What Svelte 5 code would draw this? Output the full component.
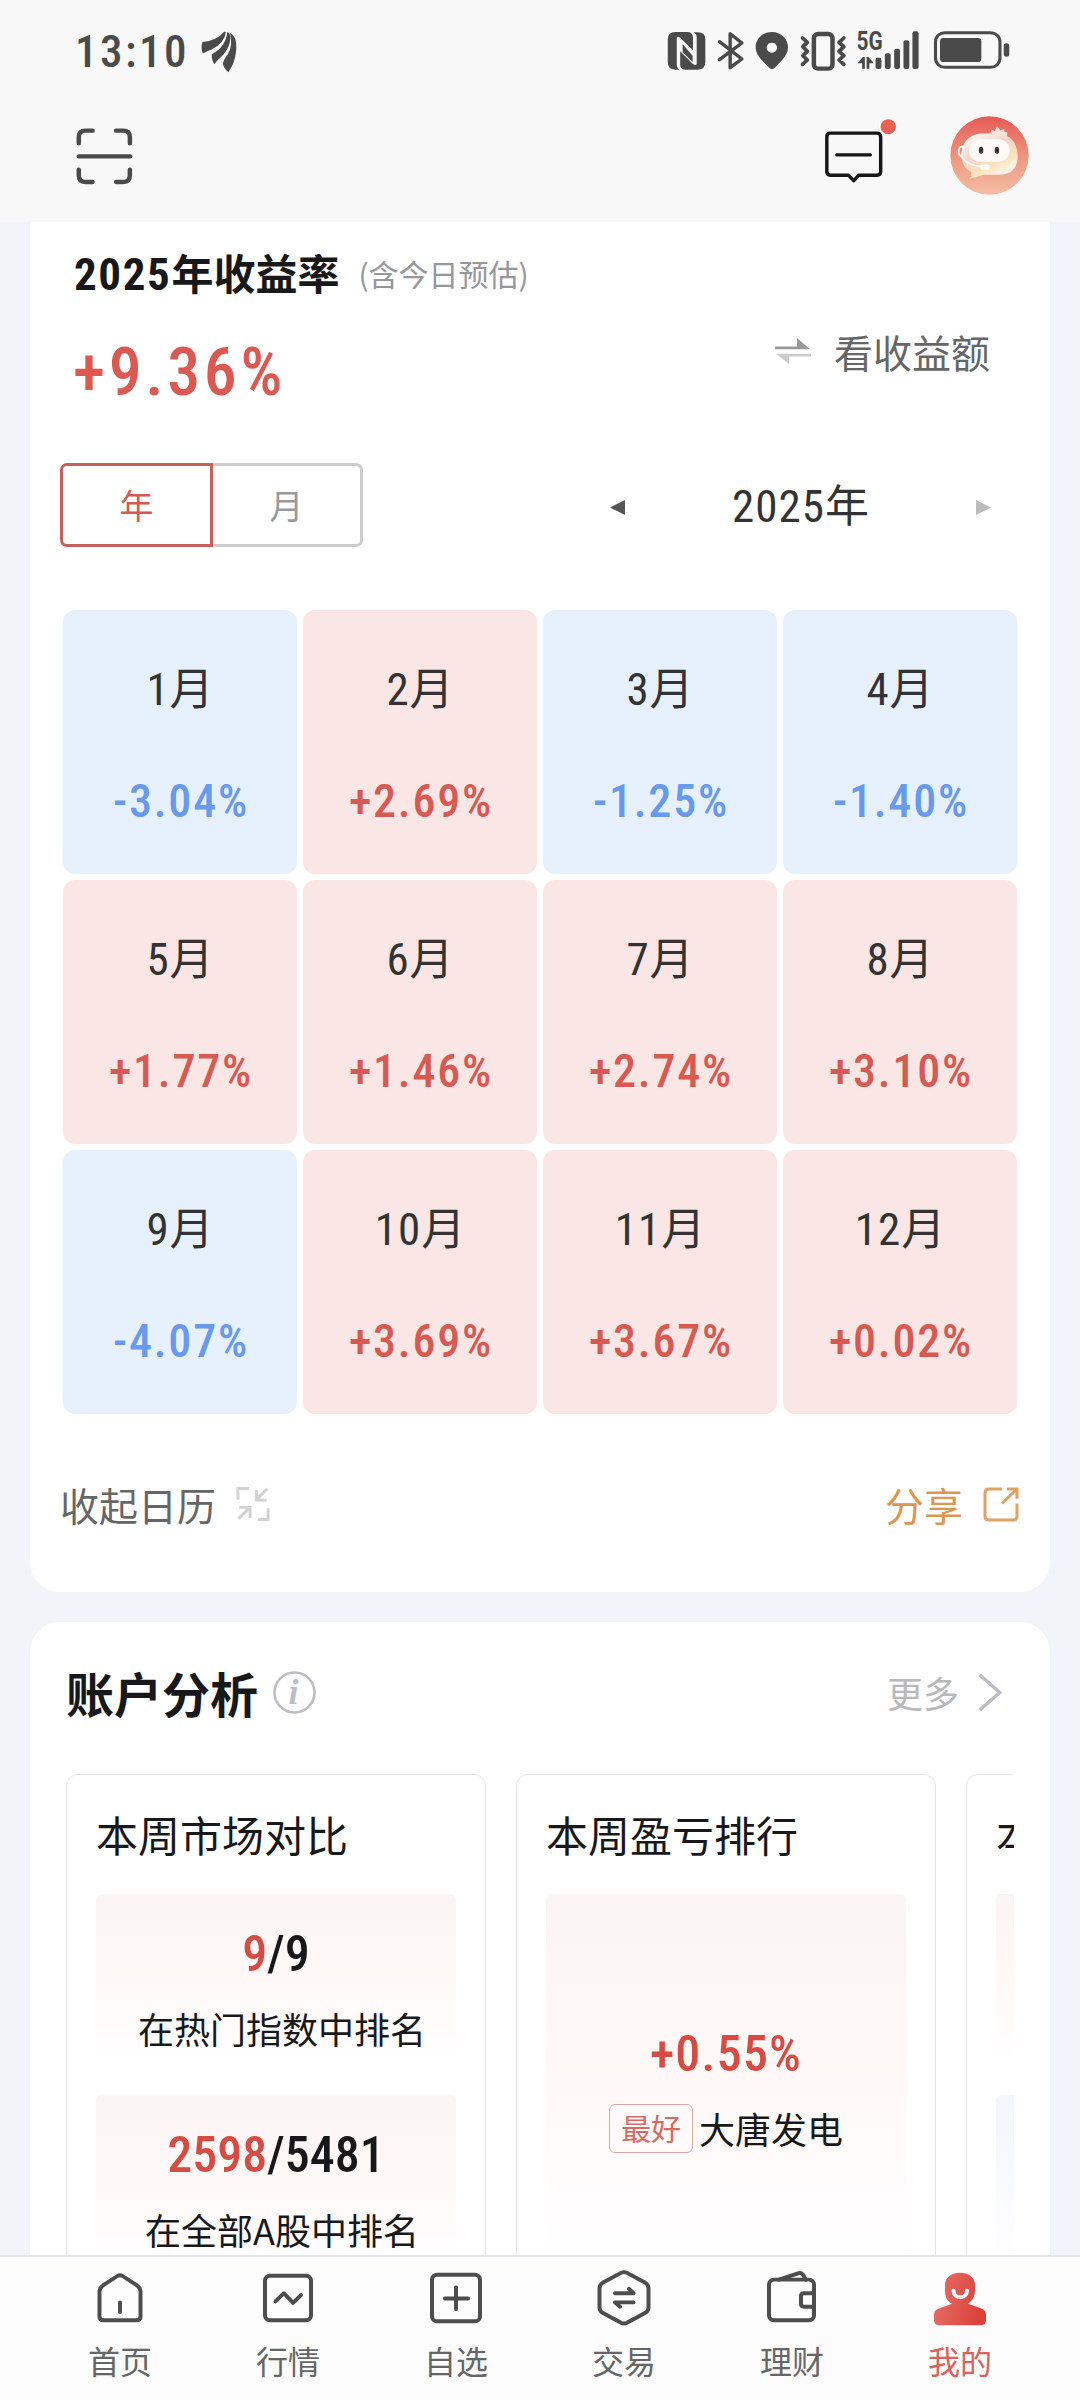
<script>
	const months = [
		{ n: 1, rate: '-3.04%' },
		{ n: 2, rate: '+2.69%' },
		{ n: 3, rate: '-1.25%' },
		{ n: 4, rate: '-1.40%' },
		{ n: 5, rate: '+1.77%' },
		{ n: 6, rate: '+1.46%' },
		{ n: 7, rate: '+2.74%' },
		{ n: 8, rate: '+3.10%' },
		{ n: 9, rate: '-4.07%' },
		{ n: 10, rate: '+3.69%' },
		{ n: 11, rate: '+3.67%' },
		{ n: 12, rate: '+0.02%' }
	];

	const tabs = [
		{ id: 'home', label: '首页' },
		{ id: 'market', label: '行情' },
		{ id: 'watch', label: '自选' },
		{ id: 'trade', label: '交易' },
		{ id: 'wealth', label: '理财' },
		{ id: 'mine', label: '我的' }
	];

	const ranks = [
		{ pos: 9, total: 9, label: '在热门指数中排名' },
		{ pos: 2598, total: 5481, label: '在全部A股中排名' }
	];

	let mode = $state('year');
	let activeTab = $state('mine');
</script>

<div class="page">
	<header>
		<div class="status">
			<div class="clock">
				<span class="time">13:10</span>
				<svg width="36" height="42" viewBox="580 92 104 125" preserveAspectRatio="none" fill="#4a4a4a">
					<path d="M584 125Q626 120 647 94L652 95Q648 128 612 146Q596 152 585 159Q579 142 584 125Z" />
					<path d="M656 95Q666 98 665 116Q661 150 635 172Q625 180 619 191Q610 178 611 161Q651 141 656 95Z" />
					<path d="M664 98Q684 107 682 146Q679 186 659 215Q645 202 643 188Q646 176 657 162Q673 136 664 98Z" />
				</svg>
			</div>
			<svg class="status-icons" width="348" height="45" viewBox="360 85 1010 135" preserveAspectRatio="none" fill="#4a4a4a">
				<!-- nfc -->
				<path d="M393 97H430Q443 98 444 112V152L410 117Q402 108 397 114V196Q398 208 406 210H393Q371 210 371 188V119Q371 97 393 97Z" />
				<path d="M446 98H458Q480 98 480 119V188Q480 210 458 210H422Q407 209 407 195V155L441 190Q451 200 455 193V114Q455 104 446 98Z" />
				<path d="M414 135L434 155V166L443 176V186L414 158Z" fill="#f8f8f8" />
				<path d="M414 133V158L443 187V168L414 133Z" />
				<!-- bluetooth -->
				<path d="M521 126L586 178L552 204V102L586 130L521 180" fill="none" stroke="#4a4a4a" stroke-width="10" stroke-linejoin="round" stroke-linecap="round" />
				<!-- location -->
				<path fill-rule="evenodd" d="M673 97C700 97 720 118 720 143C720 170 694 190 681 205Q673 212 666 205C653 190 626 170 626 143C626 118 646 97 673 97ZM673 129a15 15 0 1 0 .1 0Z" />
				<!-- vibrate -->
				<rect x="795" y="103" width="54" height="104" rx="12" fill="none" stroke="#4a4a4a" stroke-width="13" />
				<path d="M762 115L776 128L763 141L776 155L763 168L776 181L762 194M882 115L868 128L882 141L868 155L882 168L868 181L882 194" fill="none" stroke="#4a4a4a" stroke-width="11" stroke-linejoin="round" stroke-linecap="round" />
				<!-- signal -->
				<text class="net" x="919" y="150" textLength="76" lengthAdjust="spacingAndGlyphs">5G</text>
				<path d="M921 191L937 172H943V207H935V191ZM948 172H953L967 188V191H956V207H948Z" />
				<rect x="974" y="174" width="17" height="34" rx="6" />
				<rect x="1001" y="161" width="17" height="47" rx="6" />
				<rect x="1028" y="147" width="17" height="61" rx="6" />
				<rect x="1055" y="122" width="17" height="86" rx="6" />
				<rect x="1081" y="95" width="18" height="113" rx="6" />
				<!-- battery -->
				<rect x="1148" y="99" width="187" height="104" rx="27" fill="none" stroke="#4a4a4a" stroke-width="9" />
				<rect x="1161" y="115" width="120" height="72" rx="10" />
				<rect x="1346" y="131" width="16" height="40" rx="8" />
			</svg>
		</div>
		<div class="toolbar">
			<svg class="scan" width="59" height="57" viewBox="219 385 171 171" preserveAspectRatio="none" fill="none" stroke="#4a4a4a" stroke-width="13" stroke-linecap="round" stroke-linejoin="round">
				<path d="M230 431V412Q230 393 249 393H270M338 393H359Q378 393 378 412V431M378 510V527Q378 547 359 547H338M270 547H249Q230 547 230 527V510M230 470H379" />
			</svg>
			<div class="tools">
				<svg width="78" height="69" viewBox="820 350 226 206" preserveAspectRatio="none">
					<path d="M844 401H979Q990 401 990 412V516Q990 527 979 527H926L912 543L897 527H844Q834 527 834 516V412Q834 401 844 401ZM863 466H960" fill="none" stroke="#161616" stroke-width="10" stroke-linecap="round" stroke-linejoin="round" />
					<circle cx="1012" cy="382" r="28" fill="#fff" />
					<circle cx="1012" cy="382" r="22.5" fill="#ea6153" />
				</svg>
				<svg width="79" height="79" viewBox="1192 348 229 238" preserveAspectRatio="none">
					<defs>
						<linearGradient id="sky" x1="0" y1="0" x2="0" y2="1">
							<stop offset="0" stop-color="#e65a55" />
							<stop offset=".55" stop-color="#ee9a83" />
							<stop offset="1" stop-color="#f4bda3" />
						</linearGradient>
						<linearGradient id="face" x1="0" y1="0" x2=".6" y2="1">
							<stop offset="0" stop-color="#fff" />
							<stop offset=".45" stop-color="#f8d3cb" />
							<stop offset=".75" stop-color="#fae3b8" />
							<stop offset="1" stop-color="#fff6f2" />
						</linearGradient>
					</defs>
					<ellipse cx="1306.5" cy="467" rx="113.5" ry="118" fill="url(#sky)" />
					<path d="M1308 404L1313 389L1322 394L1329 378L1338 392L1349 387L1350 397L1358 396L1357 412Z" fill="#fde3de" />
					<path d="M1290 401H1325C1368 401 1388 430 1388 470C1388 506 1368 525 1335 525H1290L1248 538Q1256 528 1254 517C1235 507 1225 490 1226 466C1226 425 1250 401 1290 401Z" fill="url(#face)" />
					<rect x="1247" y="418" width="118" height="68" rx="33" fill="#fffaf8" />
					<ellipse cx="1282" cy="451" rx="6.5" ry="10.5" fill="#3d3431" />
					<ellipse cx="1328" cy="451" rx="6.5" ry="10.5" fill="#3d3431" />
					<path d="M1225 470C1212 462 1217 440 1227 440C1234 445 1228 460 1225 470Q1240 496 1284 501" fill="none" stroke="#fff" stroke-width="5" stroke-linecap="round" />
					<rect x="1280" y="494" width="27" height="16" rx="6" fill="#fff" />
				</svg>
			</div>
		</div>
	</header>

	<main>
		<section class="card profit">
			<div class="profit-title">
				<h2><span class="din">2025</span>年收益率</h2>
				<small>(含今日预估)</small>
			</div>
			<div class="profit-sum">
				<div class="total din">+9.36%</div>
				<div class="switch-amount">
					<svg width="36" height="27" viewBox="0 0 36 29" preserveAspectRatio="none">
						<path d="M0 9H22V0L35 12H0Z" fill="#999" />
						<path d="M36 17H1L14 28V20H36Z" fill="#ccc" />
					</svg>
					看收益额
				</div>
			</div>
			<div class="period">
				<div class="toggle">
					<button class:on={mode === 'year'} onclick={() => (mode = 'year')}>年</button>
					<button class:on={mode === 'month'} onclick={() => (mode = 'month')}>月</button>
				</div>
				<div class="year-nav">
					<svg width="15" height="15" viewBox="0 0 15 15"><path d="M0 7.5L15 0V15Z" fill="#555" /></svg>
					<div class="year"><span class="din">2025</span>年</div>
					<svg width="15" height="15" viewBox="0 0 15 15"><path d="M15 7.5L0 0V15Z" fill="#bbb" /></svg>
				</div>
			</div>
			<div class="months">
				{#each months as m}
					<div class="month" class:down={m.rate.startsWith('-')}>
						<div class="name"><span class="din">{m.n}</span>月</div>
						<div class="rate din">{m.rate}</div>
					</div>
				{/each}
			</div>
			<div class="profit-foot">
				<div class="fold">
					收起日历
					<svg width="34" height="34" viewBox="0 0 34 35" fill="none" stroke="#d2d2d2" stroke-width="3">
						<path d="M1.5 13V1.5H13M32 1.5L20.5 13M20.5 3V13.5H31M2 32.5L13 22M3 21H14V32M32.5 22V33.5H22" />
					</svg>
				</div>
				<div class="share">
					分享
					<svg width="36" height="35" viewBox="0 0 36 36" fill="none" stroke="#e0a263" stroke-width="3" preserveAspectRatio="none">
						<path d="M19 2H6Q2 2 2 6V30Q2 34 6 34H30Q34 34 34 30V17M19 17L33 3M24 2H34V12" />
					</svg>
				</div>
			</div>
		</section>

		<section class="card analysis">
			<div class="analysis-head">
				<h2>账户分析</h2>
				<svg width="43" height="43" viewBox="0 0 43 43">
					<circle cx="21.5" cy="21.5" r="20" fill="none" stroke="#bcbcc5" stroke-width="2.6" />
					<text class="info" x="20.5" y="33" text-anchor="middle">i</text>
				</svg>
				<div class="more">
					更多
					<svg width="25" height="37" viewBox="0 0 25 38" fill="none" stroke="#bcbcc5" stroke-width="3.5">
						<path d="M1.5 1L22 19L1.5 37" />
					</svg>
				</div>
			</div>
			<div class="panels">
				<div class="panel">
					<h3>本周市场对比</h3>
					{#each ranks as r}
						<div class="box">
							<div class="figure din"><em>{r.pos}</em>/{r.total}</div>
							<div class="caption">{r.label}</div>
						</div>
					{/each}
				</div>
				<div class="panel">
					<h3>本周盈亏排行</h3>
					<div class="box tall">
						<div class="figure din"><em>+0.55%</em></div>
						<div class="best"><span class="badge">最好</span>大唐发电</div>
					</div>
				</div>
				<div class="panel">
					<h3>本</h3>
					<div class="box"></div>
					<div class="box cool"></div>
				</div>
			</div>
		</section>
	</main>

	<nav>
		{#each tabs as tab}
			<button class="tab" class:active={activeTab === tab.id} onclick={() => (activeTab = tab.id)}>
				<svg width="60" height="60" viewBox="0 0 60 62" preserveAspectRatio="none" fill="none" stroke="#4d4d4d" stroke-width="4" stroke-linecap="round" stroke-linejoin="round">
					{#if tab.id === 'home'}
						<path d="M27 7.5Q30 5.500 33 7.5L47 17Q50.5 19.5 50.5 23V49Q50.5 53 46.5 53H13.5Q9.5 53 9.5 49V23Q9.5 19.5 13 17ZM30 34.5V44.5" />
					{:else if tab.id === 'market'}
						<rect x="7" y="7" width="46" height="46" rx="5" />
						<path d="M17.5 33.5L26 25L35 35L43 27" />
					{:else if tab.id === 'watch'}
						<rect x="6" y="6" width="48" height="48" rx="5" />
						<path d="M30 19V41.5M19 30.5H42" />
					{:else if tab.id === 'trade'}
						<path d="M27 4Q30 2.5 33 4L51 14Q54.5 16.5 54.5 20V40Q54.5 43.5 51 45.5L33 55.5Q30 57 27 55.5L9 45.5Q5.500 43.5 5.5 40V20Q5.5 16.5 9 14ZM21 25H39.5L35 20.5M39.5 34.5H21L26 39" />
					{:else if tab.id === 'wealth'}
						<rect x="7" y="11" width="45" height="42" rx="5" />
						<path d="M17 11L36 4.5Q39 3.5 41 6L44 11M52 25H42Q39 25 39 28V36Q39 39 42 39H52" />
					{:else}
						<defs>
							<linearGradient id="me" x1="0" y1="0" x2="1" y2=".2">
								<stop offset="0" stop-color="#e9716d" />
								<stop offset="1" stop-color="#da423a" />
							</linearGradient>
						</defs>
						<path d="M30 4C39 4 45 9 45 17V22C45 29 42 33 38 36L52 41Q56 43 56 47V53Q56 58 51 58H9Q4 58 4 53V47Q4 43 8 41L22 36C17 33 15 29 15 22V17C15 9 21 4 30 4Z" fill="url(#me)" stroke="none" />
						<path d="M23.5 22.5C24 31.5 36.5 31.5 37 22.5" stroke="#fff" />
					{/if}
				</svg>
				<span>{tab.label}</span>
			</button>
		{/each}
	</nav>
</div>

<style>
	:global(body) {
		margin: 0;
		background: #f3f4f9;
	}

	.page {
		width: 1080px;
		height: 2400px;
		display: flex;
		flex-direction: column;
		overflow: hidden;
		background: #f3f4f9;
		font-family: "Noto Sans CJK SC", sans-serif;
		color: #18181a;
	}

	h2, h3 {
		margin: 0;
	}

	button {
		font: inherit;
		background: none;
		border: none;
		padding: 0;
	}

	svg {
		display: block;
		flex: none;
		overflow: visible;
	}

	.din {
		font-family: "Roboto Condensed", Roboto, sans-serif;
	}

	/* header */
	header {
		height: 222px;
		flex: none;
		box-sizing: border-box;
		background: #f8f8f8;
		padding: 28px 51px 0 75px;
	}

	.status {
		height: 45px;
		display: flex;
		justify-content: space-between;
		padding-right: 17px;
	}

	.clock {
		display: flex;
		align-items: center;
		gap: 12px;
		padding-top: 2px;
	}

	.time {
		font: 500 45px/45px "Roboto Condensed", Roboto, sans-serif;
		letter-spacing: 2.5px;
		color: #4a4a4a;
	}

	.net {
		font: 700 76px Roboto, sans-serif;
	}

	.toolbar {
		display: flex;
		justify-content: space-between;
		align-items: flex-start;
		padding-top: 43px;
	}

	.scan {
		margin-top: 12px;
	}

	.tools {
		display: flex;
		gap: 50px;
	}

	/* cards */
	main {
		flex: 1;
		min-height: 0;
		overflow: hidden;
		padding: 0 30px;
	}

	.card {
		background: #fff;
		border-radius: 30px;
		box-sizing: border-box;
	}

	.profit {
		height: 1370px;
		border-top-left-radius: 0;
		border-top-right-radius: 0;
		padding: 21px 31px 0 30px;
	}

	.profit-title {
		display: flex;
		align-items: center;
		height: 60px;
		padding-left: 14px;
		gap: 19px;
	}

	.profit-title h2 {
		font-size: 42px;
		line-height: 60px;
		font-weight: 700;
	}

	.profit-title .din {
		font-size: 45px;
		letter-spacing: 1.6px;
	}

	.profit-title small {
		font-size: 30px;
		color: #97979b;
	}

	.profit-sum {
		display: flex;
		justify-content: space-between;
		height: 110px;
		padding: 0 29px 0 13px;
	}

	.total {
		font-size: 66px;
		line-height: 80px;
		font-weight: 500;
		letter-spacing: 3.6px;
		color: #dc5850;
		padding-top: 30px;
	}

	.switch-amount {
		display: flex;
		align-items: center;
		height: 60px;
		margin-top: 18px;
		gap: 23px;
		font-size: 39px;
		color: #666;
	}

	.period {
		display: flex;
		justify-content: space-between;
		margin-top: 50px;
		height: 84px;
	}

	.toggle {
		display: flex;
	}

	.toggle button {
		width: 150px;
		border: 3px solid #ccc;
		border-left: none;
		border-radius: 0 7px 7px 0;
		padding-bottom: 2px;
		font-size: 34px;
		color: #999;
	}

	.toggle button:first-child {
		width: 153px;
		border-left: 3px solid #ccc;
		border-radius: 7px 0 0 7px;
	}

	.toggle button.on, .toggle button.on:first-child {
		border-color: #c5605c;
		color: #d35a55;
	}

	.year-nav {
		width: 381px;
		display: flex;
		justify-content: space-between;
		align-items: center;
		padding-right: 28px;
	}

	.year-nav svg {
		margin-top: 4px;
	}

	.year {
		font-size: 44px;
		line-height: 60px;
		color: #333;
	}

	.year .din {
		font-size: 45px;
		letter-spacing: 1px;
	}

	.months {
		display: grid;
		grid-template-columns: repeat(4, 234px);
		grid-auto-rows: 264px;
		gap: 6px;
		margin: 63px 0 0 3px;
	}

	.month {
		border-radius: 12px;
		background: #fae6e4;
		text-align: center;
	}

	.name {
		height: 60px;
		margin-top: 46px;
		line-height: 60px;
		font-size: 44px;
		color: #333;
	}

	.name .din {
		font-size: 45px;
		letter-spacing: 1px;
	}

	.rate {
		margin-top: 55px;
		font-size: 46px;
		line-height: 60px;
		font-weight: 500;
		letter-spacing: 1.8px;
		padding-left: 2px;
		color: #d85952;
	}

	.down {
		background: #e7f1fe;
	}

	.down .rate {
		color: #6799ec;
	}

	.profit-foot {
		display: flex;
		justify-content: space-between;
		height: 60px;
		margin-top: 60px;
		font-size: 39px;
		color: #666;
	}

	.fold, .share {
		display: flex;
		align-items: center;
		gap: 20px;
	}

	.share {
		color: #dd9650;
	}

	.analysis {
		margin-top: 30px;
		height: 900px;
		padding: 40px 36px 0;
	}

	.analysis-head {
		display: flex;
		align-items: center;
		height: 60px;
	}

	.analysis-head h2 {
		font-size: 48px;
		font-weight: 700;
		margin-right: 15px;
	}

	.info {
		font: italic 700 36px "Liberation Serif", serif;
		fill: #bcbcc5;
	}

	.more {
		display: flex;
		align-items: center;
		gap: 19px;
		margin-left: auto;
		padding-right: 11px;
		font-size: 36px;
		color: #b8b8bb;
	}

	.panels {
		display: flex;
		gap: 30px;
		margin-top: 52px;
		overflow: hidden;
	}

	.panel {
		flex: none;
		width: 420px;
		height: 700px;
		box-sizing: border-box;
		border: 1px solid #e4e4e6;
		border-radius: 12px;
		padding: 29px 29px 0;
	}

	.panel h3 {
		font-size: 42px;
		line-height: 60px;
		font-weight: 400;
		margin-bottom: 30px;
	}

	.box {
		height: 172px;
		margin-bottom: 29px;
		border-radius: 6px;
		background: linear-gradient(#fbf4f4, #fef8f7 45%, #fff);
		overflow: hidden;
		text-align: center;
	}

	.box.tall {
		height: 373px;
	}

	.box.cool {
		background: linear-gradient(#f3f5fb, #fff);
	}

	.figure {
		margin-top: 30px;
		font-size: 50px;
		line-height: 60px;
		font-weight: 500;
	}

	.tall .figure {
		margin-top: 130px;
		letter-spacing: 1.2px;
	}

	.figure em {
		font-style: normal;
		color: #d74b43;
	}

	.caption {
		margin-top: 14px;
		padding-left: 12px;
		font-size: 36px;
		line-height: 60px;
	}

	.best {
		display: flex;
		justify-content: center;
		align-items: center;
		gap: 6px;
		margin-top: 14px;
		font-size: 36px;
		line-height: 60px;
	}

	.badge {
		width: 82px;
		height: 47px;
		line-height: 44px;
		border: 1px solid #dca7a4;
		border-radius: 6px;
		font-size: 30px;
		color: #d56b66;
	}

	/* bottom tabs */
	nav {
		flex: none;
		height: 145px;
		box-sizing: border-box;
		border-top: 2px solid #e4e5ea;
		background: #fcfcfc;
		display: flex;
		padding: 12px 36px 0;
	}

	.tab {
		flex: 1;
		display: flex;
		flex-direction: column;
		align-items: center;
		font-size: 32px;
		line-height: 60px;
		color: #666;
	}

	.tab span {
		margin-top: 1px;
	}

	.tab.active {
		color: #d8635d;
	}
</style>
